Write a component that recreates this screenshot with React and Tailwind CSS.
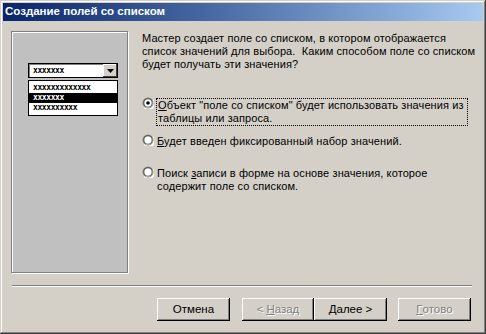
import React from "react"

const font = { fontFamily: "'Liberation Sans', Arial, sans-serif" }

function Radio({ checked }) {
  return (
    <span className="relative mt-[-1px] block h-[12px] w-[12px] shrink-0">
      <svg width="12" height="12" viewBox="0 0 12 12" className="block">
        <circle cx="6" cy="6" r="5.5" fill="#808080" />
        <path d="M1.5 9.5 A5.5 5.5 0 0 0 10.5 2.5 L11.5 3 A6 6 0 0 1 2 11 Z" fill="#fff" />
        <circle cx="6" cy="6" r="4.5" fill="#404040" />
        <path d="M2.5 9 A4.5 4.5 0 0 0 9.5 2.5 L10 3 A5 5 0 0 1 3 10 Z" fill="#d4d0c8" />
        <circle cx="6" cy="6" r="3.7" fill="#fff" />
        {checked && <circle cx="6" cy="6" r="1.8" fill="#000" />}
      </svg>
    </span>
  )
}

function Button({ children, disabled, w }) {
  return (
    <div
      className={`flex h-[23px] items-center justify-center bg-[#d4d0c8] text-[11.5px] shadow-[inset_-1px_-1px_#000,inset_1px_1px_#fff,inset_-2px_-2px_#808080] ${w} ${
        disabled ? "text-[#808080] [text-shadow:1px_1px_#fff]" : "text-black"
      }`}
    >
      {children}
    </div>
  )
}

function Pattern({ n, white }) {
  return (
    <span
      className={`block text-[8px] font-bold leading-[10px] tracking-[-0.4px] ${white ? "text-white" : "text-black"}`}
      style={{ fontFamily: "'DejaVu Sans Mono', monospace" }}
    >
      {"x".repeat(n)}
    </span>
  )
}

export default function App() {
  return (
    <div
      className="flex h-[334px] w-[486px] flex-col bg-[#d4d0c8] p-[3px] shadow-[inset_-1px_-1px_#404040,inset_1px_1px_#d4d0c8,inset_-2px_-2px_#808080,inset_2px_2px_#fff]"
      style={font}
    >
      <div className="flex h-[18px] items-center bg-gradient-to-r from-[#0a246a] to-[#a6caf0] pl-[2px] text-[11.5px] font-bold text-white">
        Создание полей со списком
      </div>

      <div className="flex pt-[10px]">
        <div className="ml-[8px] flex h-[242px] w-[117px] flex-col border border-[#808080] bg-[#c0c0c0] pl-[16px] pt-[31px] shadow-[1px_1px_#fff,inset_1px_1px_#fff]">
          <div className="flex h-[15px] w-[90px] items-center justify-between border border-black bg-white pl-[4px] shadow-[inset_1px_1px_#808080]">
            <Pattern n={7} />
            <div className="flex h-[13px] w-[14px] items-center justify-center bg-[#d4d0c8] shadow-[inset_-1px_-1px_#404040,inset_1px_1px_#fff]">
              <svg width="7" height="4" viewBox="0 0 7 4">
                <path d="M0 0 H7 L3.5 4 Z" fill="#000" />
              </svg>
            </div>
          </div>
          <div className="mt-[2px] flex w-[90px] flex-col border border-black bg-white py-[2px]">
            <div className="pl-[4px]"><Pattern n={13} /></div>
            <div className="bg-black pl-[4px]"><Pattern n={7} white /></div>
            <div className="pl-[4px]"><Pattern n={10} /></div>
          </div>
        </div>

        <div className="ml-[14px] flex flex-col whitespace-nowrap pt-[1px] text-[11px] leading-[13px] tracking-[0.1px] text-black">
          <p>
            Мастер создает поле со списком, в котором отображается
            <br />
            список значений для выбора.&nbsp; Каким способом поле со списком
            <br />
            будет получать эти значения?
          </p>

          <div className="mt-[27px] flex items-start">
            <Radio checked />
            <div className="ml-[2px] border border-dotted border-black pl-[1px] pr-[3px]">
              <span className="underline">О</span>бъект "поле со списком" будет использовать значения из
              <br />
              таблицы или запроса.
            </div>
          </div>

          <div className="mt-[9px] flex items-start">
            <Radio />
            <div className="ml-[3px]">
              <span className="underline">Б</span>удет введен фиксированный набор значений.
            </div>
          </div>

          <div className="mt-[19px] flex items-start">
            <Radio />
            <div className="ml-[3px]">
              Поиск <span className="underline">з</span>аписи в форме на основе значения, которое
              <br />
              содержит поле со списком.
            </div>
          </div>
        </div>
      </div>

      <div className="ml-[9px] mr-[11px] mt-[12px] h-[2px] border-t border-[#808080] border-b border-b-white" />

      <div className="mt-[11px] flex pl-[154px]">
        <Button w="w-[73px]">Отмена</Button>
        <div className="ml-[12px] flex">
          <Button w="w-[72px]" disabled>
            &lt; <span className="ml-[3px] underline">Н</span>азад
          </Button>
          <Button w="w-[73px]">
            <span className="underline">Д</span>алее &gt;
          </Button>
        </div>
        <div className="ml-[11px]">
          <Button w="w-[73px]" disabled>
            <span className="underline">Г</span>отово
          </Button>
        </div>
      </div>
    </div>
  )
}
